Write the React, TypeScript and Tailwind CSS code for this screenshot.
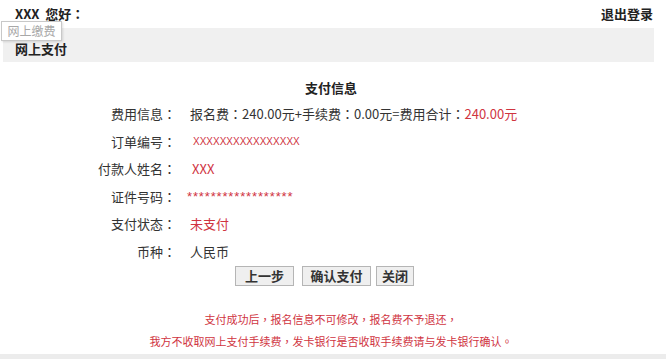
import React from "react";

const font = { fontFamily: '"Noto Sans CJK SC", "Noto Sans", sans-serif' };
const punct = { fontFamily: '"Noto Sans CJK TC", "Noto Sans CJK SC", sans-serif' };

function C({ ch = "：" }: { ch?: string }) {
  return <span style={punct}>{ch}</span>;
}

function Row({ label, children }: { label: string; children: React.ReactNode }) {
  return (
    <div className="flex h-[27.5px] items-center">
      <div className="w-[176px] shrink-0 text-right text-[13px] text-[#333]">
        {label}
        <C />
      </div>
      <div className="ml-[14px] flex items-center text-[13px] text-[#333]">{children}</div>
    </div>
  );
}

export default function App() {
  return (
    <div className="relative h-[359px] w-[666px] overflow-hidden bg-white" style={font}>
      <div className="flex h-[28px] items-center justify-between pl-[15px] pr-[13px] text-[13px] font-bold text-[#222]">
        <span>
          XXX&nbsp;&nbsp;您好
          <C />
        </span>
        <span>退出登录</span>
      </div>
      <div className="ml-[3px] mr-[12px] h-[34px] bg-[#f0f0f0] pl-[12px] pt-[12px] text-[13px] font-bold leading-[18px] text-[#222]">
        网上支付
      </div>
      <div className="absolute left-[1px] top-[21px] flex h-[20px] w-[61px] items-center justify-center border border-[#c8c8c8] bg-white text-[12px] text-[#a8a8a8] shadow-[1px_1px_2px_rgba(0,0,0,0.12)]">
        网上缴费
      </div>

      <div className="mt-[15px] flex h-[22px] items-center justify-center text-[13px] font-bold text-[#222]">
        <span className="ml-[-4px]">支付信息</span>
      </div>
      <div className="mt-[1px]">
        <Row label="费用信息">
          <span>
            报名费<C />240.00元+手续费<C />0.00元=费用合计<C />
            <span className="text-[#d0343f]">240.00元</span>
          </span>
        </Row>
        <Row label="订单编号">
          <span className="ml-[3px] text-[10px] text-[#d0343f]" style={{ fontFamily: '"Liberation Sans", sans-serif' }}>
            XXXXXXXXXXXXXXXX
          </span>
        </Row>
        <Row label="付款人姓名">
          <span className="ml-[2px] text-[#d0343f]">XXX</span>
        </Row>
        <Row label="证件号码">
          <span
            className="ml-[-3px] text-[13px] tracking-[0.85px] text-[#d0343f]"
            style={{ fontFamily: '"Liberation Sans", sans-serif' }}
          >
            ******************
          </span>
        </Row>
        <Row label="支付状态">
          <span className="text-[#d0343f]">未支付</span>
        </Row>
        <Row label="币种">
          <span>人民币</span>
        </Row>
      </div>
      <div className="mt-[1px] flex justify-center pr-[17px] text-[13px] font-bold text-[#333]">
        <button className="flex h-[20px] w-[59px] items-center justify-center border border-[#b5b5b5] bg-[#efefef]">上一步</button>
        <button className="ml-[8px] flex h-[20px] w-[69px] items-center justify-center border border-[#b5b5b5] bg-[#efefef]">确认支付</button>
        <button className="ml-[5px] flex h-[20px] w-[38px] items-center justify-center border border-[#b5b5b5] bg-[#efefef]">关闭</button>
      </div>
      <div className="mt-[22px] flex h-[22px] items-center justify-center pr-[4px] text-[11px] text-[#d0343f]">
        支付成功后<C ch="，" />报名信息不可修改<C ch="，" />报名费不予退还<C ch="，" />
      </div>
      <div className="flex h-[22px] items-center justify-center pr-[4px] text-[11px] text-[#d0343f]">
        我方不收取网上支付手续费<C ch="，" />发卡银行是否收取手续费请与发卡银行确认<C ch="。" />
      </div>
      <div className="mt-[2px] h-[6px] bg-[#ececec]" />
    </div>
  );
}
